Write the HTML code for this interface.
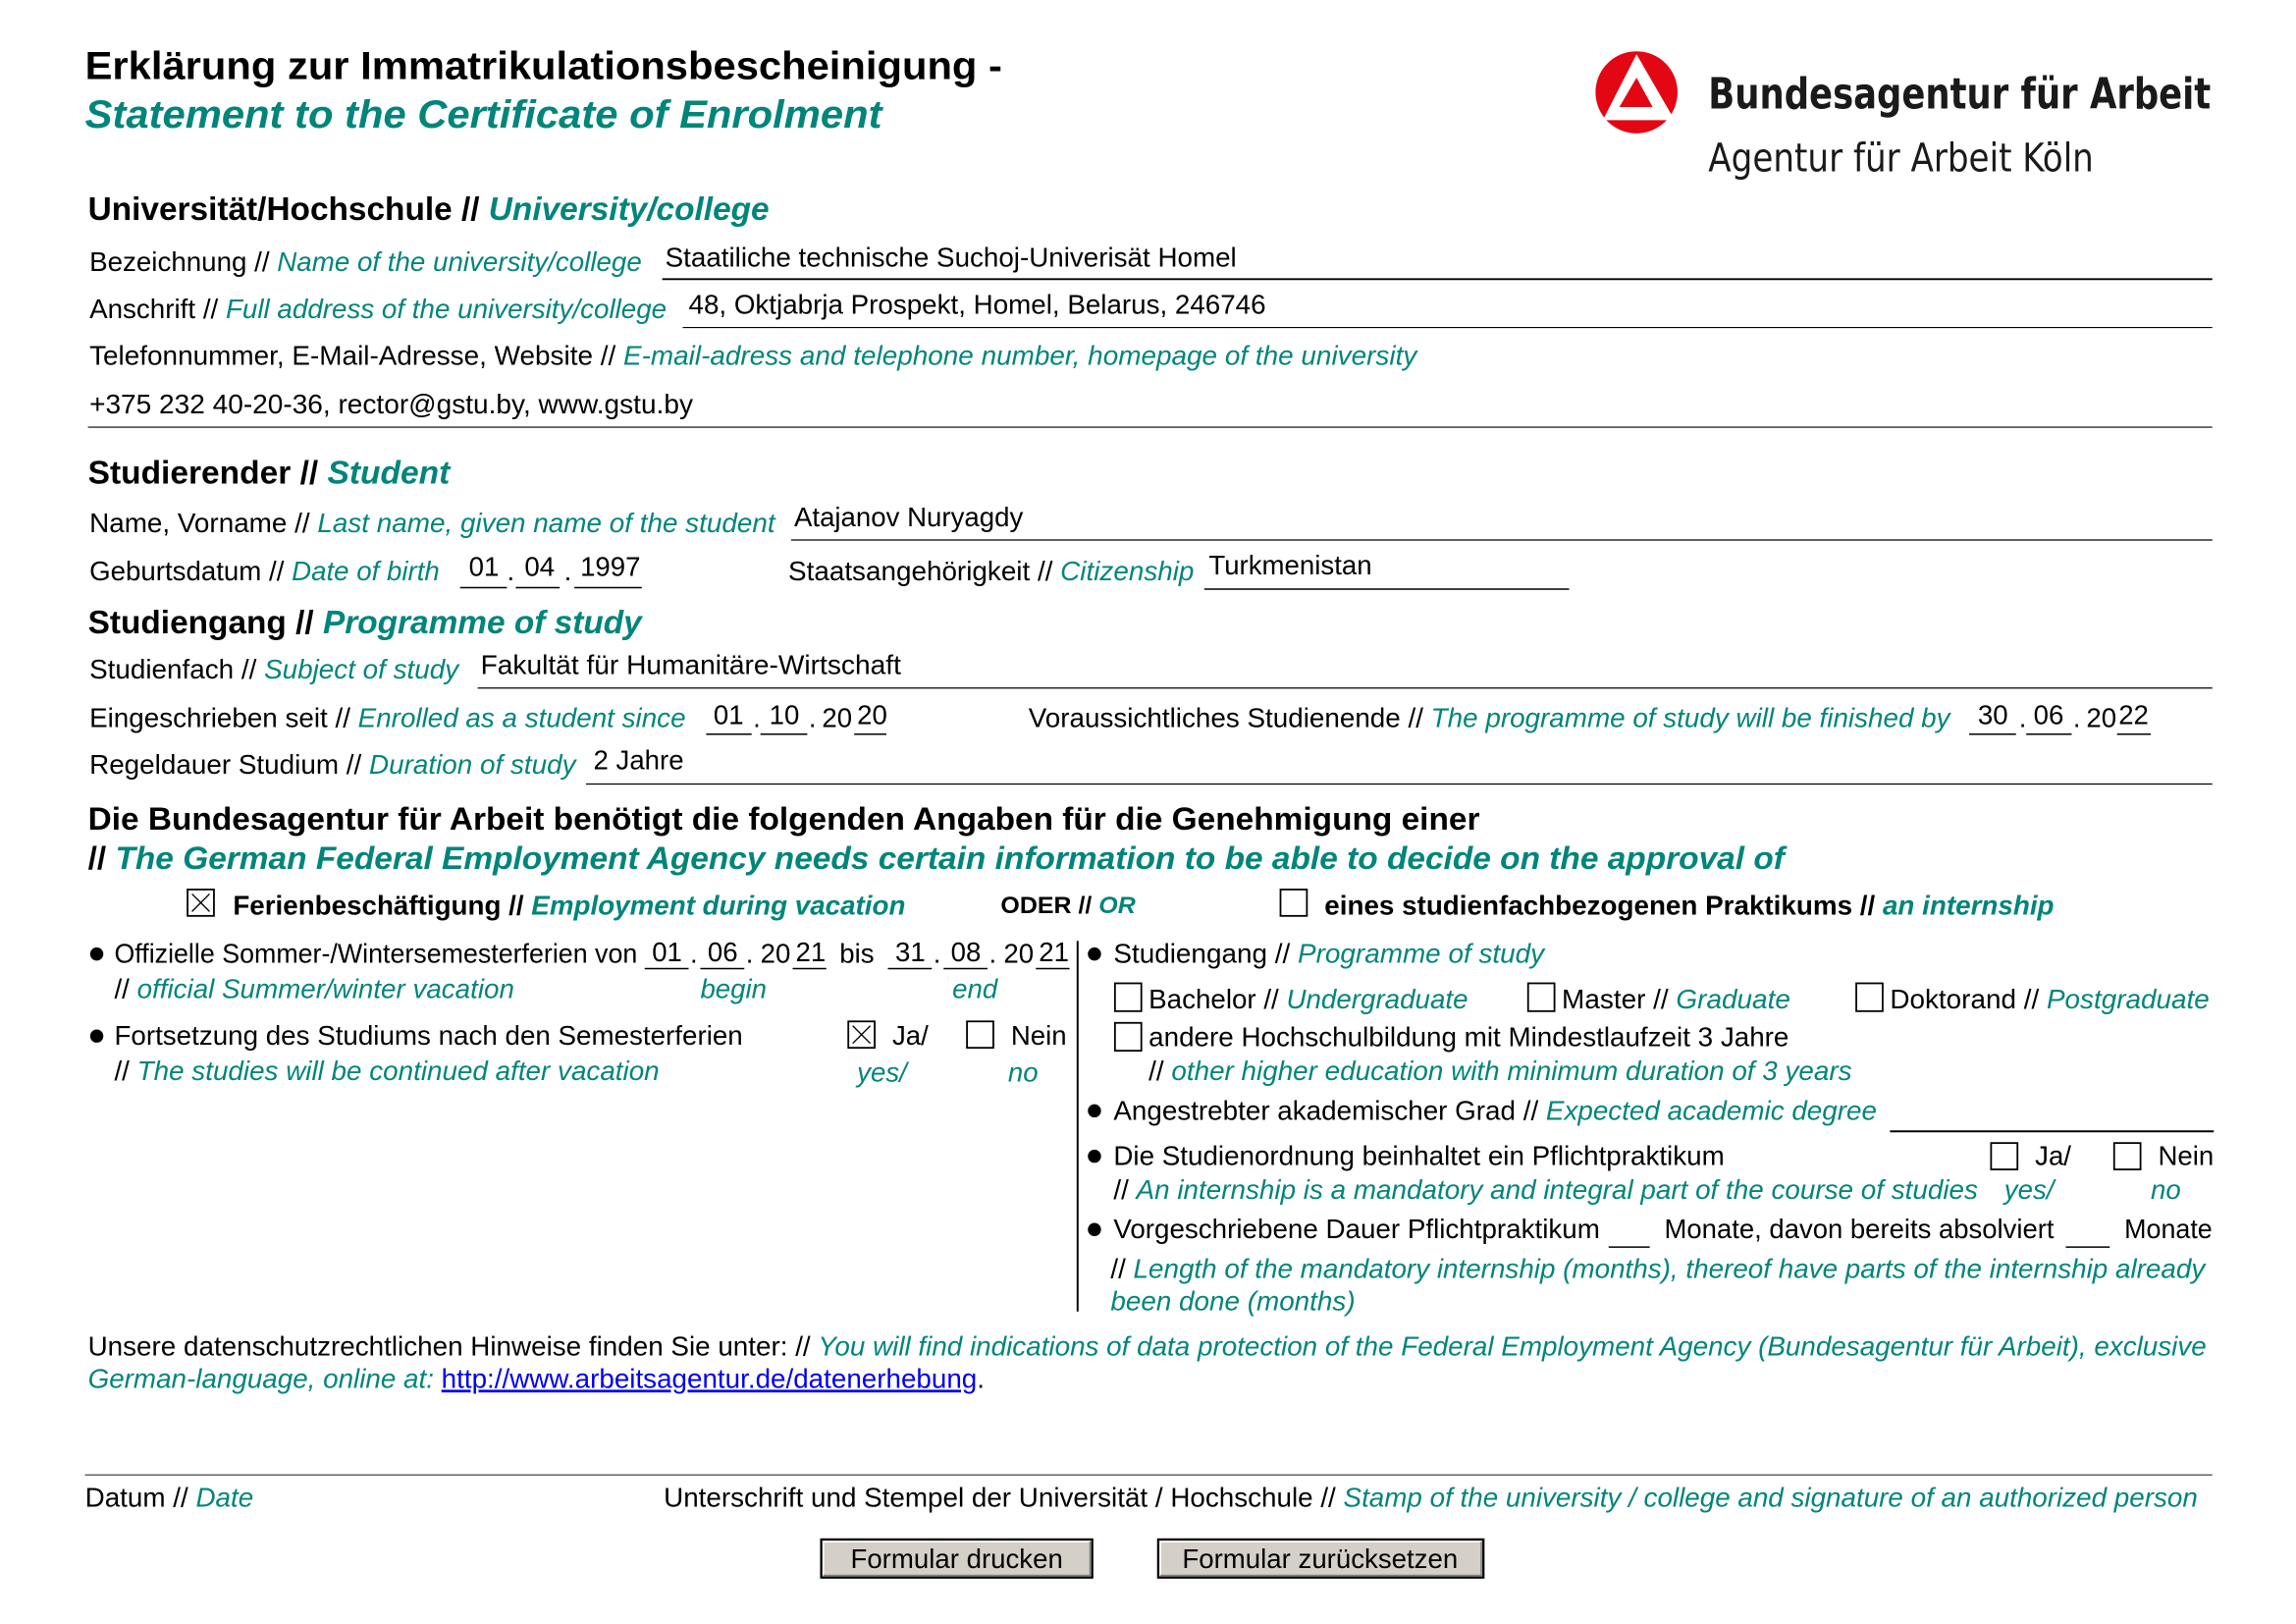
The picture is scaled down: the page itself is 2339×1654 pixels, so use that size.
<!DOCTYPE html>
<html><head><meta charset="utf-8"><style>
html,body{margin:0;padding:0;background:#fff;overflow:hidden}
svg{display:block}
text{font-family:"Liberation Sans",Arial,sans-serif;font-size:18.5px;fill:#000}
.g{fill:#00857a;font-style:italic}
.b{font-weight:bold}
.h{font-size:22.5px;font-weight:bold}
</style></head><body>
<svg width="2339" height="1654" viewBox="0 0 1567.1 1108.2" xmlns="http://www.w3.org/2000/svg">
<rect width="1570" height="1110" fill="#fff"/>
<!-- Title -->
<text x="58" y="54" style="font-size:27px;font-weight:bold" textLength="626" lengthAdjust="spacingAndGlyphs">Erklärung zur Immatrikulationsbescheinigung -</text>
<text x="58" y="87" class="g" style="font-size:27px;font-weight:bold" textLength="544" lengthAdjust="spacingAndGlyphs">Statement to the Certificate of Enrolment</text>
<!-- Logo -->
<circle cx="1117" cy="63" r="28" fill="#e30613"/>
<path d="M1117 37 L1143 82 L1099 82 L1104 73 L1128 73 L1117 53 L1100 82 L1094 82 Z" fill="#fff"/>
<path d="M1107 73 L1117 56 L1120 73 Z" fill="#e30613"/>
<text x="1166" y="74" style="font-family:'DejaVu Sans Condensed','DejaVu Sans',sans-serif;font-size:29px;font-weight:bold;fill:#1a1a1a" textLength="343" lengthAdjust="spacingAndGlyphs">Bundesagentur für Arbeit</text>
<text x="1166" y="117" style="font-family:'DejaVu Sans Condensed','DejaVu Sans',sans-serif;font-size:27px;fill:#1a1a1a" textLength="263" lengthAdjust="spacingAndGlyphs">Agentur für Arbeit Köln</text>

<!-- University -->
<text x="60" y="150" class="h" textLength="465" lengthAdjust="spacingAndGlyphs">Universität/Hochschule // <tspan class="g">University/college</tspan></text>
<text x="61" y="185" textLength="377" lengthAdjust="spacingAndGlyphs">Bezeichnung // <tspan class="g">Name of the university/college</tspan></text>
<text x="454" y="182" textLength="390" lengthAdjust="spacingAndGlyphs">Staatiliche technische Suchoj-Univerisät Homel</text>
<line x1="452" y1="190.5" x2="1510" y2="190.5" stroke="#000" stroke-width="1.3"/>
<text x="61" y="217" textLength="394" lengthAdjust="spacingAndGlyphs">Anschrift // <tspan class="g">Full address of the university/college</tspan></text>
<text x="470" y="214" textLength="394" lengthAdjust="spacingAndGlyphs">48, Oktjabrja Prospekt, Homel, Belarus, 246746</text>
<line x1="466" y1="223.5" x2="1510" y2="223.5" stroke="#000" stroke-width="0.8"/>
<text x="61" y="249" textLength="906" lengthAdjust="spacingAndGlyphs">Telefonnummer, E-Mail-Adresse, Website // <tspan class="g">E-mail-adress and telephone number, homepage of the university</tspan></text>
<text x="61" y="282" textLength="412" lengthAdjust="spacingAndGlyphs">+375 232 40-20-36, rector@gstu.by, www.gstu.by</text>
<line x1="60" y1="291.5" x2="1510" y2="291.5" stroke="#000" stroke-width="0.8"/>

<!-- Student -->
<text x="60" y="330" class="h" textLength="247" lengthAdjust="spacingAndGlyphs">Studierender // <tspan class="g">Student</tspan></text>
<text x="61" y="363" textLength="468" lengthAdjust="spacingAndGlyphs">Name, Vorname // <tspan class="g">Last name, given name of the student</tspan></text>
<text x="542" y="359">Atajanov Nuryagdy</text>
<line x1="540" y1="368.5" x2="1510" y2="368.5" stroke="#000" stroke-width="0.8"/>
<text x="61" y="396" textLength="239" lengthAdjust="spacingAndGlyphs">Geburtsdatum // <tspan class="g">Date of birth</tspan></text>
<text x="320" y="393">01</text><text x="346" y="396">.</text>
<text x="358" y="393">04</text><text x="385" y="396">.</text>
<text x="396" y="393">1997</text>
<g stroke="#000" stroke-width="1"><line x1="314" y1="401" x2="346" y2="401"/><line x1="352" y1="401" x2="382" y2="401"/><line x1="392" y1="401" x2="438" y2="401"/></g>
<text x="538" y="396" textLength="277" lengthAdjust="spacingAndGlyphs">Staatsangehörigkeit // <tspan class="g">Citizenship</tspan></text>
<text x="825" y="392">Turkmenistan</text>
<line x1="822" y1="402" x2="1071" y2="402" stroke="#000" stroke-width="1"/>

<!-- Programme -->
<text x="60" y="432" class="h" textLength="378" lengthAdjust="spacingAndGlyphs">Studiengang // <tspan class="g">Programme of study</tspan></text>
<text x="61" y="463" textLength="252" lengthAdjust="spacingAndGlyphs">Studienfach // <tspan class="g">Subject of study</tspan></text>
<text x="328" y="460" textLength="287" lengthAdjust="spacingAndGlyphs">Fakultät für Humanitäre-Wirtschaft</text>
<line x1="326" y1="469.5" x2="1510" y2="469.5" stroke="#000" stroke-width="0.8"/>
<text x="61" y="496" textLength="407" lengthAdjust="spacingAndGlyphs">Eingeschrieben seit // <tspan class="g">Enrolled as a student since</tspan></text>
<text x="487" y="494">01</text><text x="514" y="496">.</text>
<text x="525" y="494">10</text><text x="552" y="496">.</text>
<text x="561" y="496">20</text><text x="585" y="494">20</text>
<g stroke="#000" stroke-width="1"><line x1="482" y1="501" x2="513" y2="501"/><line x1="519" y1="501" x2="551" y2="501"/><line x1="583" y1="501" x2="605" y2="501"/></g>
<text x="702" y="496" textLength="629" lengthAdjust="spacingAndGlyphs">Voraussichtliches Studienende // <tspan class="g">The programme of study will be finished by</tspan></text>
<text x="1350" y="494">30</text><text x="1378" y="496">.</text>
<text x="1388" y="494">06</text><text x="1415" y="496">.</text>
<text x="1424" y="496">20</text><text x="1446" y="494">22</text>
<g stroke="#000" stroke-width="1"><line x1="1344" y1="501" x2="1376" y2="501"/><line x1="1383" y1="501" x2="1414" y2="501"/><line x1="1445" y1="501" x2="1468" y2="501"/></g>
<text x="61" y="528" textLength="332" lengthAdjust="spacingAndGlyphs">Regeldauer Studium // <tspan class="g">Duration of study</tspan></text>
<text x="405" y="525">2 Jahre</text>
<line x1="400" y1="535" x2="1510" y2="535" stroke="#000" stroke-width="0.8"/>

<!-- Agency section -->
<text x="60" y="566" style="font-size:22px;font-weight:bold" textLength="950" lengthAdjust="spacingAndGlyphs">Die Bundesagentur für Arbeit benötigt die folgenden Angaben für die Genehmigung einer</text>
<text x="60" y="593" style="font-size:22px;font-weight:bold" textLength="1158" lengthAdjust="spacingAndGlyphs">// <tspan class="g">The German Federal Employment Agency needs certain information to be able to decide on the approval of</tspan></text>

<g fill="none" stroke="#000" stroke-width="1.2">
<rect x="128" y="607" width="18" height="18"/>
<rect x="874" y="607" width="18" height="18"/>
<rect x="579" y="697" width="18" height="18"/>
<rect x="660" y="697" width="18" height="18"/>
<rect x="761" y="671" width="18" height="19"/>
<rect x="1043" y="671" width="18" height="19"/>
<rect x="1267" y="671" width="18" height="19"/>
<rect x="761" y="698" width="18" height="19"/>
<rect x="1359" y="780" width="18" height="18"/>
<rect x="1443" y="780" width="18" height="18"/>
</g>
<g stroke="#000" stroke-width="0.9">
<line x1="131" y1="610" x2="143" y2="622"/><line x1="143" y1="610" x2="131" y2="622"/>
<line x1="582" y1="700" x2="594" y2="712"/><line x1="594" y1="700" x2="582" y2="712"/>
</g>
<text x="159" y="624" class="b" style="font-size:18.5px" textLength="459" lengthAdjust="spacingAndGlyphs">Ferienbeschäftigung // <tspan class="g">Employment during vacation</tspan></text>
<text x="683" y="623" class="b" style="font-size:16px" textLength="92" lengthAdjust="spacingAndGlyphs">ODER // <tspan class="g">OR</tspan></text>
<text x="904" y="624" class="b" style="font-size:18.5px" textLength="498" lengthAdjust="spacingAndGlyphs">eines studienfachbezogenen Praktikums // <tspan class="g">an internship</tspan></text>

<!-- left column -->
<circle cx="66" cy="651" r="4.5" fill="#000"/>
<text x="78" y="657" textLength="357" lengthAdjust="spacingAndGlyphs">Offizielle Sommer-/Wintersemesterferien von</text>
<text x="445" y="656">01</text><text x="471" y="657">.</text>
<text x="483" y="656">06</text><text x="509" y="657">.</text>
<text x="519" y="657">20</text><text x="543" y="656">21</text>
<text x="573" y="657">bis</text>
<text x="611" y="656">31</text><text x="637" y="657">.</text>
<text x="649" y="656">08</text><text x="675" y="657">.</text>
<text x="685" y="657">20</text><text x="709" y="656">21</text>
<g stroke="#000" stroke-width="1">
<line x1="440" y1="661" x2="470" y2="661"/><line x1="478" y1="661" x2="508" y2="661"/><line x1="541" y1="661" x2="564" y2="661"/>
<line x1="606" y1="661" x2="636" y2="661"/><line x1="644" y1="661" x2="674" y2="661"/><line x1="707" y1="661" x2="730" y2="661"/>
</g>
<text x="78" y="681" textLength="273" lengthAdjust="spacingAndGlyphs">// <tspan class="g">official Summer/winter vacation</tspan></text>
<text x="478" y="681" class="g">begin</text>
<text x="650" y="681" class="g">end</text>
<circle cx="66" cy="707" r="4.5" fill="#000"/>
<text x="78" y="713" textLength="429" lengthAdjust="spacingAndGlyphs">Fortsetzung des Studiums nach den Semesterferien</text>
<text x="609" y="713">Ja/</text>
<text x="690" y="713">Nein</text>
<text x="78" y="737" textLength="372" lengthAdjust="spacingAndGlyphs">// <tspan class="g">The studies will be continued after vacation</tspan></text>
<text x="585" y="738" class="g">yes/</text>
<text x="688" y="738" class="g">no</text>

<line x1="735.5" y1="642" x2="735.5" y2="895" stroke="#000" stroke-width="1.3"/>

<!-- right column -->
<circle cx="747" cy="651" r="4.5" fill="#000"/>
<text x="760" y="657" textLength="294" lengthAdjust="spacingAndGlyphs">Studiengang // <tspan class="g">Programme of study</tspan></text>
<text x="784" y="688" textLength="218" lengthAdjust="spacingAndGlyphs">Bachelor // <tspan class="g">Undergraduate</tspan></text>
<text x="1066" y="688" textLength="156" lengthAdjust="spacingAndGlyphs">Master // <tspan class="g">Graduate</tspan></text>
<text x="1290" y="688" textLength="218" lengthAdjust="spacingAndGlyphs">Doktorand // <tspan class="g">Postgraduate</tspan></text>
<text x="784" y="714" textLength="437" lengthAdjust="spacingAndGlyphs">andere Hochschulbildung mit Mindestlaufzeit 3 Jahre</text>
<text x="784" y="737" textLength="480" lengthAdjust="spacingAndGlyphs">// <tspan class="g">other higher education with minimum duration of 3 years</tspan></text>
<circle cx="747" cy="758" r="4.5" fill="#000"/>
<text x="760" y="764" textLength="521" lengthAdjust="spacingAndGlyphs">Angestrebter akademischer Grad // <tspan class="g">Expected academic degree</tspan></text>
<line x1="1290" y1="772" x2="1511" y2="772" stroke="#000" stroke-width="1.3"/>
<circle cx="747" cy="789" r="4.5" fill="#000"/>
<text x="760" y="795" textLength="417" lengthAdjust="spacingAndGlyphs">Die Studienordnung beinhaltet ein Pflichtpraktikum</text>
<text x="1389" y="795">Ja/</text>
<text x="1473" y="795">Nein</text>
<text x="760" y="818" textLength="590" lengthAdjust="spacingAndGlyphs">// <tspan class="g">An internship is a mandatory and integral part of the course of studies</tspan></text>
<text x="1368" y="818" class="g">yes/</text>
<text x="1468" y="818" class="g">no</text>
<circle cx="747" cy="839" r="4.5" fill="#000"/>
<text x="760" y="845" textLength="332" lengthAdjust="spacingAndGlyphs">Vorgeschriebene Dauer Pflichtpraktikum</text>
<text x="1136" y="845" textLength="266" lengthAdjust="spacingAndGlyphs">Monate, davon bereits absolviert</text>
<text x="1450" y="845" textLength="60" lengthAdjust="spacingAndGlyphs">Monate</text>
<g stroke="#000" stroke-width="1"><line x1="1098" y1="851" x2="1126" y2="851"/><line x1="1410" y1="851" x2="1440" y2="851"/></g>
<text x="758" y="872" textLength="747" lengthAdjust="spacingAndGlyphs">// <tspan class="g">Length of the mandatory internship (months), thereof have parts of the internship already</tspan></text>
<text x="758" y="894" class="g" textLength="167" lengthAdjust="spacingAndGlyphs">been done (months)</text>

<!-- data protection -->
<text x="60" y="925" textLength="1446" lengthAdjust="spacingAndGlyphs">Unsere datenschutzrechtlichen Hinweise finden Sie unter: // <tspan class="g">You will find indications of data protection of the Federal Employment Agency (Bundesagentur für Arbeit), exclusive</tspan></text>
<text x="60" y="947" textLength="612" lengthAdjust="spacingAndGlyphs"><tspan class="g">German-language, online at: </tspan><tspan style="fill:#0000ee;text-decoration:underline">http://www.arbeitsagentur.de/datenerhebung</tspan>.</text>

<line x1="58" y1="1006.5" x2="1510" y2="1006.5" stroke="#555" stroke-width="0.9"/>
<text x="58" y="1028" textLength="115" lengthAdjust="spacingAndGlyphs">Datum // <tspan class="g">Date</tspan></text>
<text x="453" y="1028" textLength="1047" lengthAdjust="spacingAndGlyphs">Unterschrift und Stempel der Universität / Hochschule // <tspan class="g">Stamp of the university / college and signature of an authorized person</tspan></text>

<!-- buttons -->
<rect x="560.5" y="1050.5" width="185" height="26" fill="#d4d0c8" stroke="#000" stroke-width="1.5"/>
<polyline points="562,1075 562,1052 744,1052" fill="none" stroke="#fff" stroke-width="1"/>
<polyline points="562,1075 744,1075 744,1052" fill="none" stroke="#808080" stroke-width="1"/>
<text x="653" y="1070" text-anchor="middle" style="font-size:18.5px">Formular drucken</text>
<rect x="790.5" y="1050.5" width="222" height="26" fill="#d4d0c8" stroke="#000" stroke-width="1.5"/>
<polyline points="792,1075 792,1052 1011,1052" fill="none" stroke="#fff" stroke-width="1"/>
<polyline points="792,1075 1011,1075 1011,1052" fill="none" stroke="#808080" stroke-width="1"/>
<text x="901" y="1070" text-anchor="middle" style="font-size:18.5px">Formular zurücksetzen</text>
</svg>
</body></html>
